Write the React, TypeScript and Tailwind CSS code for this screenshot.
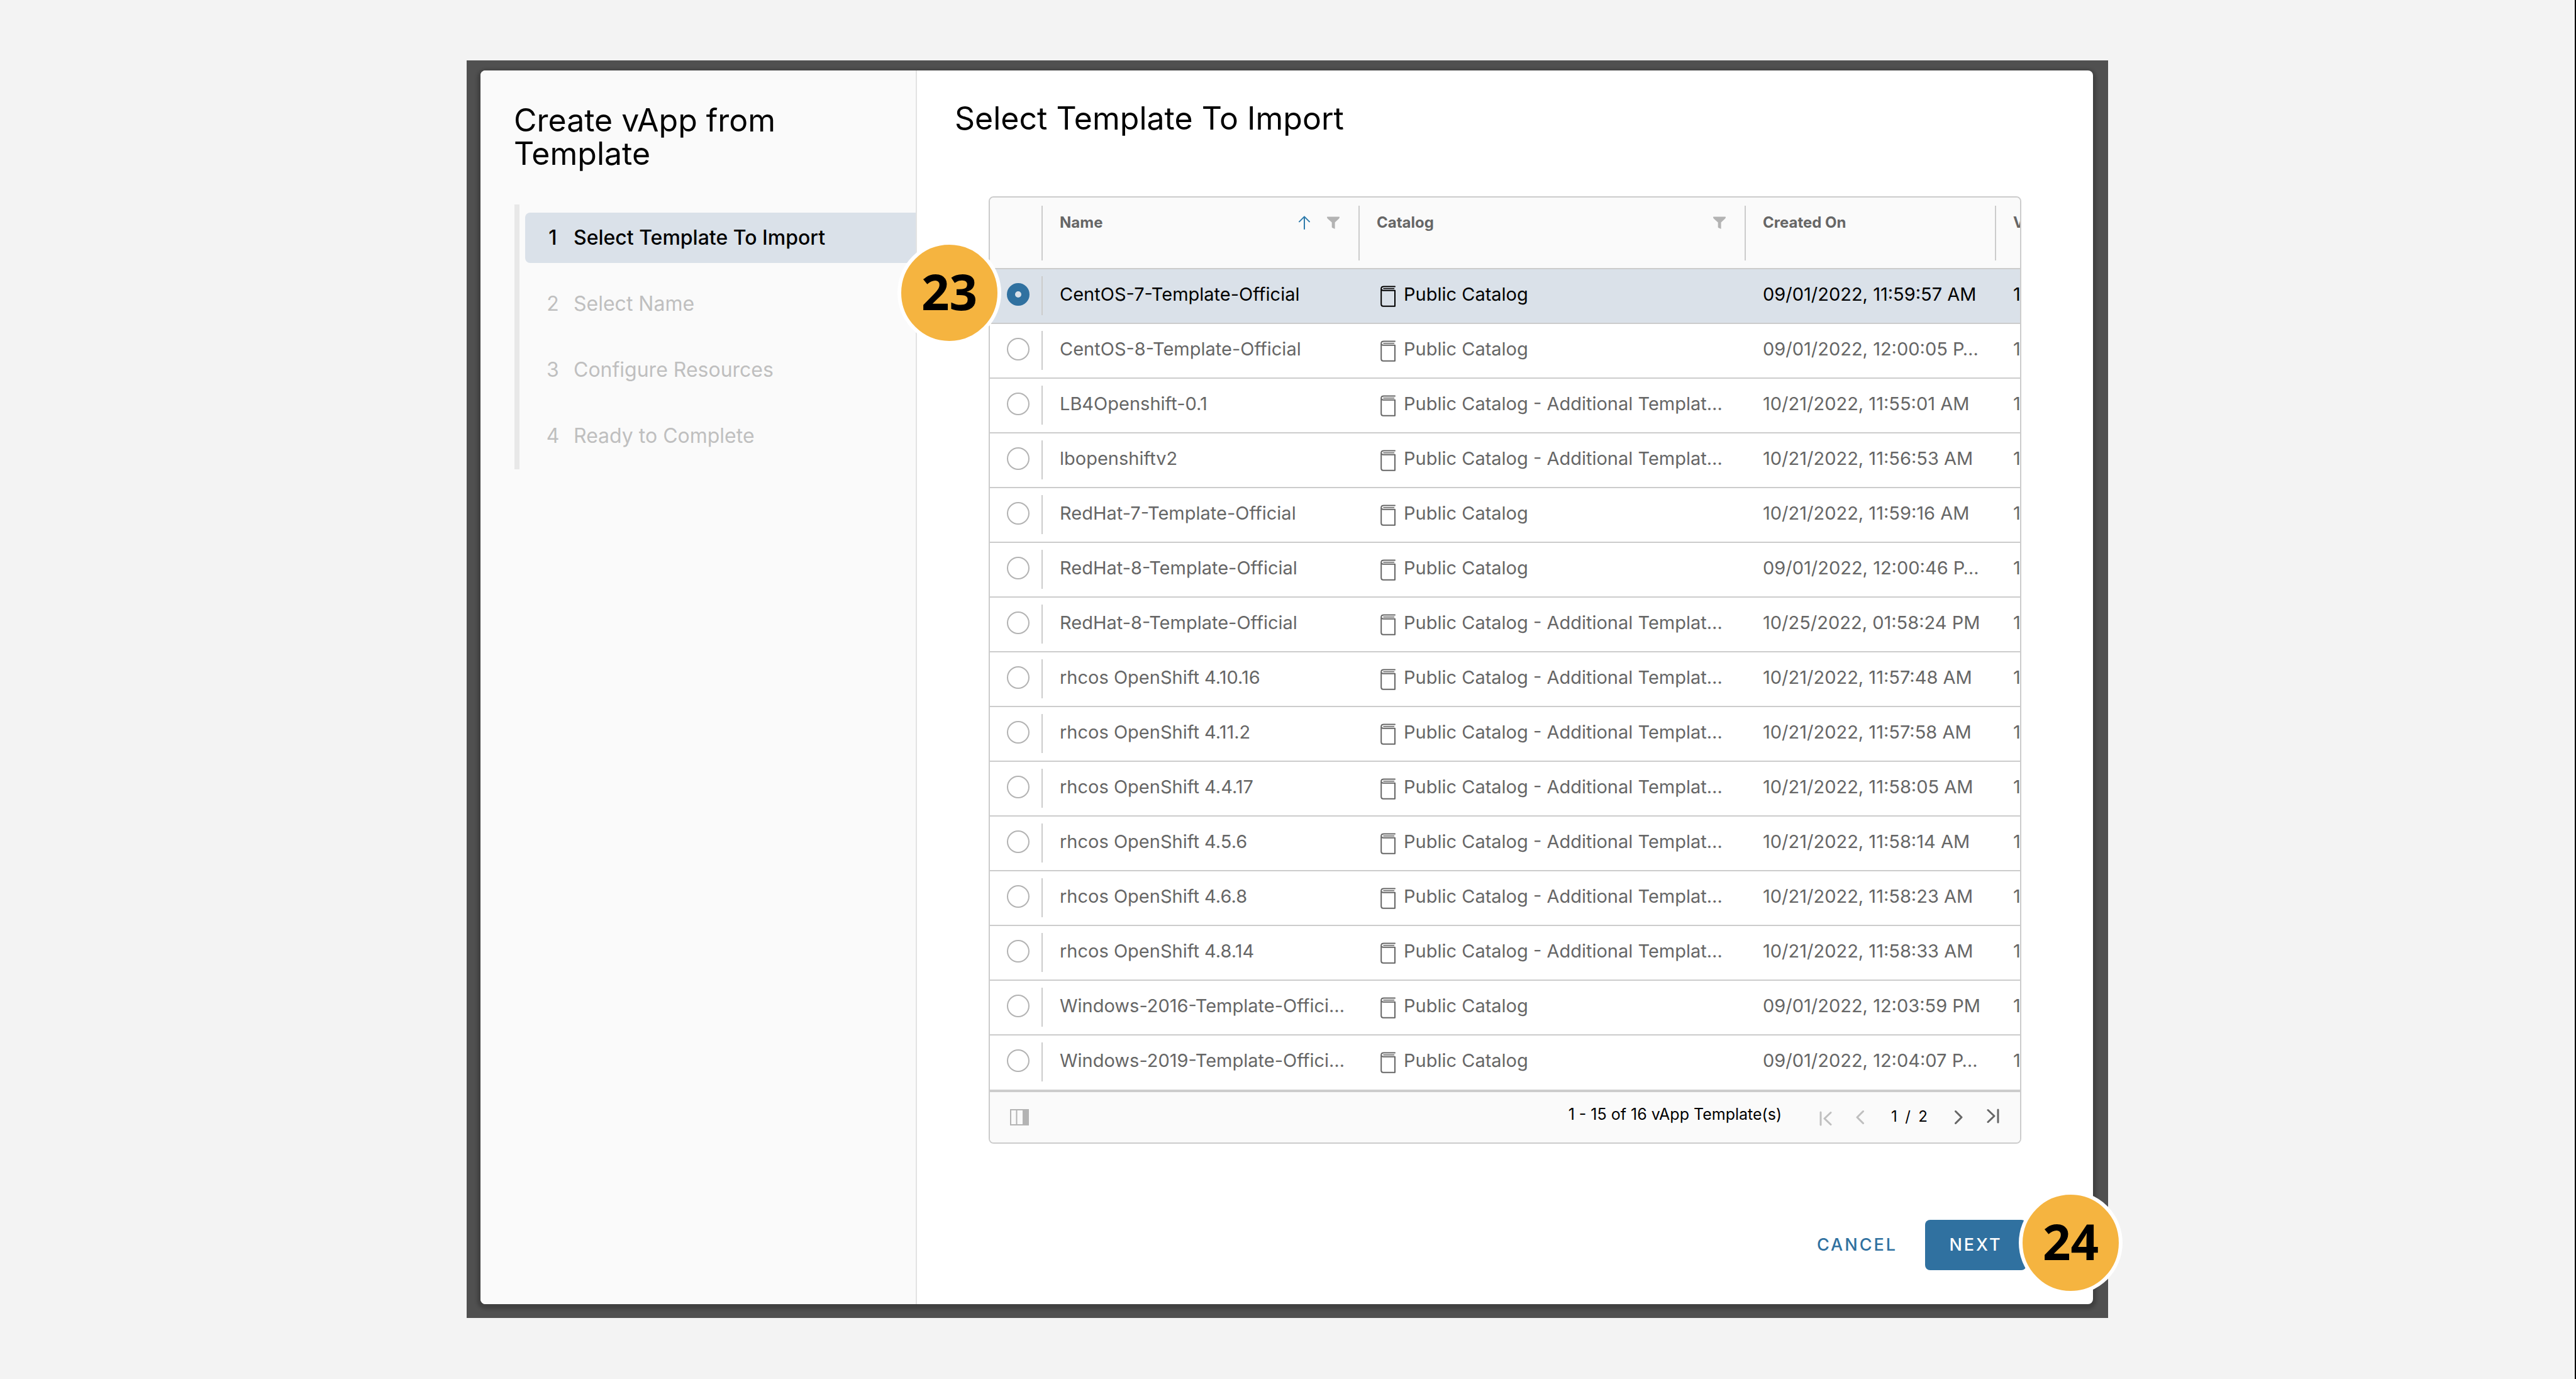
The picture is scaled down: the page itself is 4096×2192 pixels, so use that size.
import React, { useState } from "react";

type Template = { name: string; catalog: string; created: string };

const MAIN = "Public Catalog";
const EXTRA = "Public Catalog - Additional Templat…";

const templates: Template[] = [
  { name: "CentOS-7-Template-Official", catalog: MAIN, created: "09/01/2022, 11:59:57 AM" },
  { name: "CentOS-8-Template-Official", catalog: MAIN, created: "09/01/2022, 12:00:05 P…" },
  { name: "LB4Openshift-0.1", catalog: EXTRA, created: "10/21/2022, 11:55:01 AM" },
  { name: "lbopenshiftv2", catalog: EXTRA, created: "10/21/2022, 11:56:53 AM" },
  { name: "RedHat-7-Template-Official", catalog: MAIN, created: "10/21/2022, 11:59:16 AM" },
  { name: "RedHat-8-Template-Official", catalog: MAIN, created: "09/01/2022, 12:00:46 P…" },
  { name: "RedHat-8-Template-Official", catalog: EXTRA, created: "10/25/2022, 01:58:24 PM" },
  { name: "rhcos OpenShift 4.10.16", catalog: EXTRA, created: "10/21/2022, 11:57:48 AM" },
  { name: "rhcos OpenShift 4.11.2", catalog: EXTRA, created: "10/21/2022, 11:57:58 AM" },
  { name: "rhcos OpenShift 4.4.17", catalog: EXTRA, created: "10/21/2022, 11:58:05 AM" },
  { name: "rhcos OpenShift 4.5.6", catalog: EXTRA, created: "10/21/2022, 11:58:14 AM" },
  { name: "rhcos OpenShift 4.6.8", catalog: EXTRA, created: "10/21/2022, 11:58:23 AM" },
  { name: "rhcos OpenShift 4.8.14", catalog: EXTRA, created: "10/21/2022, 11:58:33 AM" },
  { name: "Windows-2016-Template-Offici…", catalog: MAIN, created: "09/01/2022, 12:03:59 PM" },
  { name: "Windows-2019-Template-Offici…", catalog: MAIN, created: "09/01/2022, 12:04:07 P…" },
];

const steps = ["Select Template To Import", "Select Name", "Configure Resources", "Ready to Complete"];

function CatalogIcon() {
  return (
    <svg viewBox="0 0 24 34" className="mt-[6px] h-[34px] w-[24px] shrink-0" fill="none" stroke="currentColor" aria-hidden="true">
      <path strokeWidth="2" strokeLinecap="round" strokeLinejoin="round" d="M23 1.6H5.5C3 1.6 1.2 3 1.2 5v24.5c0 2 1.3 3.2 3.3 3.2H23V7.7H4.5c-2 0-3.3-1-3.3-2.7" />
      <path strokeWidth="1.6" strokeLinecap="round" d="M5 4.8h16.5" />
    </svg>
  );
}

function SortIcon() {
  return (
    <svg viewBox="0 0 18 22" className="h-[22px] w-[18px]" fill="none" stroke="#2f7bac" strokeWidth="2" strokeLinecap="round" strokeLinejoin="round" aria-hidden="true">
      <path d="M9 21V1.6M1 9.4l8-8 8 8" />
    </svg>
  );
}

function FilterIcon() {
  return (
    <svg viewBox="0 0 20 20" className="h-[20px] w-[20px]" fill="#b3b3b3" aria-hidden="true">
      <path d="M.6.6h18.8c.4 0 .6.3.6.7 0 1.3-1 2.3-2 3.3L12.6 9.5v9.7c0 .5-.5.7-1 .4l-3.3-1.7c-.4-.2-.6-.5-.6-.9V9.5L2 4.6C1 3.6 0 2.6 0 1.3 0 .9.2.6.6.6z" />
    </svg>
  );
}

function PagerIcon({ kind }: { kind: "first" | "prev" | "next" | "last" }) {
  const d = {
    first: "M2 7v20M18 7.5l-10 9.5 10 9.5",
    prev: "M11.5 5.5L2 15l9.5 9.5",
    next: "M1.5 5.5L11 15l-9.5 9.5",
    last: "M2 3.5l10 9.5-10 9.5M18 3v20",
  }[kind];
  const wide = kind === "first" || kind === "last";
  return (
    <svg
      viewBox={wide ? "0 0 20 30" : "0 0 13 30"}
      className={wide ? "h-[30px] w-[20px]" : "h-[30px] w-[13px]"}
      fill="none"
      stroke="currentColor"
      strokeWidth="3"
      strokeLinecap="round"
      strokeLinejoin="round"
      aria-hidden="true"
    >
      <path d={d} />
    </svg>
  );
}

function HeaderCell({ label, sort, filter, last }: { label: string; sort?: boolean; filter?: boolean; last?: boolean }) {
  return (
    <th scope="col" className="p-0 align-top text-left font-bold">
      <div className={last ? "mt-[13px] h-[87px] pl-[27px]" : "mt-[13px] h-[87px] border-r-2 border-[#cccccc] pr-[30px] pl-[27px]"}>
        <div className="flex h-[54px] items-center gap-[27px]">
          <span className="flex-1 whitespace-nowrap">{label}</span>
          {sort && (
            <button type="button" aria-label={`Sort by ${label}`}>
              <SortIcon />
            </button>
          )}
          {filter && (
            <button type="button" aria-label={`Filter ${label}`}>
              <FilterIcon />
            </button>
          )}
        </div>
      </div>
    </th>
  );
}

function Row({ item, checked, last, onSelect }: { item: Template; checked: boolean; last: boolean; onSelect: () => void }) {
  const cell = "flex h-full items-center gap-[13px] overflow-hidden whitespace-nowrap pb-[6px] pl-[27px]";
  return (
    <tr
      className={
        (last ? "h-[87px] " : "h-[87px] border-b-2 border-[#cccccc] ") +
        (checked ? "bg-[#dae1e9] text-black" : "bg-white text-[#666666]")
      }
    >
      <td className="h-[85px] p-0 align-top">
        <div className="mt-[11px] flex h-[62px] items-center border-r-2 border-[#cccccc] pb-[5px] pl-[27px]">
          <input
            type="radio"
            name="template"
            aria-label={item.name}
            checked={checked}
            onChange={onSelect}
            className="size-[36px] appearance-none rounded-full border-2 border-[#b3b3b3] bg-transparent checked:border-[13px] checked:border-[#3071a0]"
          />
        </div>
      </td>
      <td className="h-[85px] p-0">
        <div className={cell}>{item.name}</div>
      </td>
      <td className="h-[85px] p-0">
        <div className={cell + " ml-[6px]"}>
          <CatalogIcon />
          <span>{item.catalog}</span>
        </div>
      </td>
      <td className="h-[85px] p-0">
        <div className={cell}>{item.created}</div>
      </td>
      <td className="h-[85px] p-0">
        <div className={cell}>1</div>
      </td>
    </tr>
  );
}

const badge =
  "absolute flex size-[165px] items-center justify-center rounded-full border-[6px] border-white bg-[#f5b440] pb-[5px] font-['Open_Sans',sans-serif] text-[78px] leading-none font-bold text-black";

export default function App() {
  const [selected, setSelected] = useState(0);
  return (
    <main className="flex min-h-screen border-r-2 border-black bg-[#f3f3f3] px-[742px] pt-[96px] pb-[97px] font-['Inter',sans-serif] text-black">
      <div className="flex flex-1 bg-[#505050] pt-[16px] pr-[24px] pb-[22px] pl-[22px]">
        <div role="dialog" aria-label="Create vApp from Template" className="relative flex flex-1 rounded-[8px] bg-white shadow-[0_3px_5px_5px_rgba(0,0,0,0.2)]">
          <aside className="w-[694px] shrink-0 rounded-l-[8px] border-r-2 border-[#e3e3e3] bg-[#fafafa] pt-[53px] pl-[53px]">
            <h1 className="w-[460px] text-[50px] leading-[53px]">Create vApp from Template</h1>
            <ol className="mt-[54px] ml-px flex flex-col gap-[25px] border-l-[8px] border-[#e8e8e8] py-[13px] pl-[9px] text-[32px]">
              {steps.map((step, i) => (
                <li key={step}>
                  <button
                    type="button"
                    aria-current={i === 0 ? "step" : undefined}
                    disabled={i > 0}
                    className={
                      i === 0
                        ? "flex h-[80px] w-full items-center gap-[22px] rounded-l-[8px] bg-[#dae1e9] pb-px pl-[33px] font-medium text-black"
                        : "flex h-[80px] w-full items-center gap-[22px] pb-px pl-[33px] text-[#bfbfbf]"
                    }
                  >
                    <span className="w-[22px] text-center">{i + 1}</span>
                    <span>{step}</span>
                  </button>
                </li>
              ))}
            </ol>
          </aside>

          <section className="flex min-w-0 flex-1 flex-col pt-[50px] pb-[54px]">
            <h2 className="pl-[60px] text-[50px] leading-[53px]">Select Template To Import</h2>

            <div className="mx-[114px] mt-[97px] overflow-hidden rounded-[8px] border-2 border-[#cccccc]">
              <table className="w-full table-fixed border-collapse text-[29px]">
                <colgroup>
                  <col className="w-[84px]" />
                  <col className="w-[504px]" />
                  <col className="w-[614px]" />
                  <col className="w-[398px]" />
                  <col />
                </colgroup>
                <thead>
                  <tr className="h-[113px] border-b-2 border-[#cccccc] bg-[#fafafa] text-[24px] text-[#666666]">
                    <td className="p-0 align-top">
                      <div className="mt-[13px] h-[87px] border-r-2 border-[#cccccc]" />
                    </td>
                    <HeaderCell label="Name" sort filter />
                    <HeaderCell label="Catalog" filter />
                    <HeaderCell label="Created On" />
                    <HeaderCell label="V" last />
                  </tr>
                </thead>
                <tbody>
                  {templates.map((item, i) => (
                    <Row
                      key={item.name + item.created}
                      item={item}
                      checked={selected === i}
                      last={i === templates.length - 1}
                      onSelect={() => setSelected(i)}
                    />
                  ))}
                </tbody>
              </table>

              <div className="flex h-[84px] items-center border-t-[4px] border-[#cccccc] bg-[#fafafa] pr-[33px] pb-px pl-[32px] text-[24px]">
                <button type="button" aria-label="Manage columns">
                  <svg viewBox="0 0 30 26" className="h-[26px] w-[30px]" aria-hidden="true">
                    <path fill="none" stroke="#b3b3b3" strokeWidth="2" d="M1 1h28v24H1zM10.5 1v24" />
                    <path fill="#b3b3b3" d="M20 1h10v24H20z" />
                  </svg>
                </button>
                <span className="ml-auto pb-[7px] text-[25px]">1 - 15 of 16 vApp Template(s)</span>
                <nav aria-label="Pages" className="ml-[60px] flex items-center">
                  <button type="button" aria-label="First page" disabled className="text-[#bfbfbf]">
                    <PagerIcon kind="first" />
                  </button>
                  <button type="button" aria-label="Previous page" disabled className="ml-[38px] text-[#bfbfbf]">
                    <PagerIcon kind="prev" />
                  </button>
                  <span className="mx-[43px] flex w-[58px] justify-between pb-[2px]">
                    <span>1</span>
                    <span>/</span>
                    <span>2</span>
                  </span>
                  <button type="button" aria-label="Next page" className="text-[#666666]">
                    <PagerIcon kind="next" />
                  </button>
                  <button type="button" aria-label="Last page" className="ml-[38px] text-[#666666]">
                    <PagerIcon kind="last" />
                  </button>
                </nav>
              </div>
            </div>

            <div className="mt-auto flex items-center justify-end gap-[44px] pr-[106px] text-[27px] font-medium tracking-[3px]">
              <button type="button" className="text-[#3071a0]">
                CANCEL
              </button>
              <button type="button" className="h-[80px] w-[161px] rounded-[8px] bg-[#3071a0] text-white">
                NEXT
              </button>
            </div>
          </section>

          <div className={badge + " top-[271px] left-[663px]"}>23</div>
          <div className={badge + " -right-[47px] bottom-[15px]"}>24</div>
        </div>
      </div>
    </main>
  );
}
